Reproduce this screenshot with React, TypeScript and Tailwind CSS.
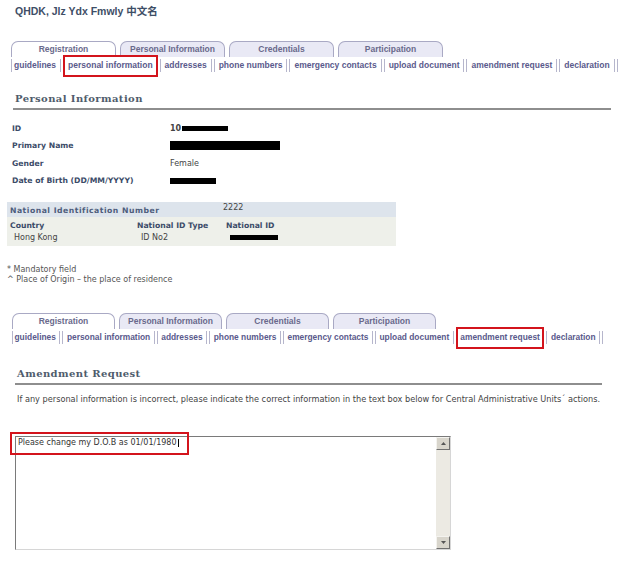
import React from "react"

const tabs = ["Registration", "Personal Information", "Credentials", "Participation"]
const links = [
  "guidelines",
  "personal information",
  "addresses",
  "phone numbers",
  "emergency contacts",
  "upload document",
  "amendment request",
  "declaration",
]

const Bar = () => <span className="w-px h-[13px] shrink-0 bg-[#b6b6cc]" />

const DoubleBar = () => (
  <span className="flex shrink-0 gap-[2px] mx-[2px]">
    <Bar />
    <Bar />
  </span>
)

const TabBar = ({ active, tabW, small }: { active: string; tabW: number; small?: boolean }) => (
  <div>
    <div className="flex gap-[4px] h-[16px]">
      {tabs.map((t, i) => (
        <div
          key={t}
          style={{ width: tabW }}
          className={
            i === 0
              ? "whitespace-nowrap rounded-t-[7px] border border-b-0 border-[#a9a9c4] bg-white text-center text-[8.5px] font-bold leading-[15px] text-[#6a6a8c]"
              : "whitespace-nowrap rounded-t-[7px] border border-b-0 border-[#a9a9c4] bg-[#e9e9f5] text-center text-[8.5px] font-bold leading-[15px] text-[#6a6a8c]"
          }
        >
          {t}
        </div>
      ))}
    </div>
    <div
      className={
        small
          ? "flex items-center h-[17px] whitespace-nowrap text-[8.4px] font-bold text-[#5a5a8c]"
          : "flex items-center h-[17px] whitespace-nowrap text-[8.5px] font-bold text-[#5a5a8c]"
      }
    >
      <Bar />
      {links.map((l, i) => (
        <React.Fragment key={l}>
          {i > 0 && <DoubleBar />}
          <span className={small ? "relative shrink-0 px-[1.5px] leading-[17px]" : "relative shrink-0 px-[2px] leading-[17px]"}>
            {l}
            {l === active && (
              <span className="absolute top-[-2px] bottom-[-3px] left-[-3px] right-[-3px] border-2 border-[#d3141c]" />
            )}
          </span>
        </React.Fragment>
      ))}
      <DoubleBar />
    </div>
  </div>
)

const Heading = ({ children, w }: { children: React.ReactNode; w: string }) => (
  <div className={w}>
    <div className="pl-[2px] font-['DejaVu_Serif',serif] text-[10px] font-bold tracking-[0.4px] text-[#4f5c6c] leading-[14px]">
      {children}
    </div>
    <div className="mt-[2px] h-[2px] bg-[#8e8e8e]" />
  </div>
)

const rows: [string, React.ReactNode][] = [
  ["ID", <span className="font-bold">10<span className="inline-block w-[46px] h-[5px] bg-black align-middle ml-[1px]" /></span>],
  ["Primary Name", <span className="inline-block w-[110px] h-[9px] bg-black align-middle" />],
  ["Gender", "Female"],
  ["Date of Birth (DD/MM/YYYY)", <span className="inline-block w-[46px] h-[6px] bg-black align-middle" />],
]

export default function App() {
  return (
    <div className="w-[620px] h-[563px] overflow-hidden bg-white font-['DejaVu_Sans',sans-serif] text-[8px] text-[#444]">
      <div className="pt-[5px] pl-[15px] font-['Liberation_Sans','Noto_Sans_CJK_SC',sans-serif] text-[10.5px] font-bold text-[#3e4e66] leading-[12px]">
        QHDK, Jlz Ydx Fmwly 中文名
      </div>

      <div className="mt-[24px] ml-[11px] font-['Liberation_Sans',sans-serif]">
        <TabBar active="personal information" tabW={105} />
      </div>

      <div className="mt-[18px] ml-[13px]">
        <Heading w="w-[598px]">Personal Information</Heading>
      </div>

      <div className="mt-[10px] ml-[12px] grid grid-cols-[158px_1fr] auto-rows-[17.5px] items-center">
        {rows.map(([k, v]) => (
          <React.Fragment key={k}>
            <div className="font-bold text-[7.7px] text-[#3b4b68]">{k}</div>
            <div>{v}</div>
          </React.Fragment>
        ))}
      </div>

      <div className="mt-[12px] ml-[7px] w-[389px]">
        <div className="h-[15px] bg-[#dde4ec] flex">
          <div className="w-[216px] pl-[3px] leading-[17px] font-bold text-[7.7px] tracking-[0.5px] text-[#4d5d7c]">
            National Identification Number
          </div>
          <div className="leading-[12px]">2222</div>
        </div>
        <div className="bg-[#eef0ea] pt-[3px] pb-[2px]">
          <div className="flex h-[12px] items-center font-bold text-[7.7px] text-[#3b4b68]">
            <div className="w-[130px] pl-[3px]">Country</div>
            <div className="w-[89px]">National ID Type</div>
            <div>National ID</div>
          </div>
          <div className="flex h-[12px] items-center">
            <div className="w-[134px] pl-[7px]">Hong Kong</div>
            <div className="w-[89px]">ID No2</div>
            <div>
              <span className="inline-block w-[48px] h-[5px] bg-black align-middle" />
            </div>
          </div>
        </div>
      </div>

      <div className="mt-[19px] ml-[7px] leading-[10px] text-[#555]">
        <div>* Mandatory field</div>
        <div>^ Place of Origin – the place of residence</div>
      </div>

      <div className="mt-[28px] ml-[12px] font-['Liberation_Sans',sans-serif]">
        <TabBar active="amendment request" tabW={103} small />
      </div>

      <div className="mt-[21px] ml-[15px]">
        <Heading w="w-[587px]">Amendment Request</Heading>
      </div>

      <div className="mt-[9px] ml-[17px] text-[8.2px] text-[#444] leading-[10px] whitespace-nowrap">
        If any personal information is incorrect, please indicate the correct information in the text box below for Central Administrative Units´ actions.
      </div>

      <div className="relative mt-[32px] ml-[15px] w-[436px] h-[114px] flex border border-t-[#7a7a7a] border-l-[#7a7a7a] border-r-[#d6d6d6] border-b-[#d6d6d6]">
        <div className="flex-1 pl-[2px] pt-[1px] leading-[10px] text-[#333]">
          Please change my D.O.B as 01/01/1980<span className="inline-block w-px h-[8px] bg-black align-middle ml-[1px]" />
        </div>
        <div className="w-[14px] bg-[#eceae3] flex flex-col justify-between">
          <div className="h-[13px] bg-[#d8d5cc] border border-[#f4f3ef] border-r-[#6f6f6f] border-b-[#6f6f6f] flex items-center justify-center">
            <svg width="5" height="3" viewBox="0 0 5 3"><path d="M0 3 L2.5 0 L5 3 Z" fill="#555" /></svg>
          </div>
          <div className="h-[13px] bg-[#d8d5cc] border border-[#f4f3ef] border-r-[#6f6f6f] border-b-[#6f6f6f] flex items-center justify-center">
            <svg width="5" height="3" viewBox="0 0 5 3"><path d="M0 0 L2.5 3 L5 0 Z" fill="#555" /></svg>
          </div>
        </div>
        <div className="absolute top-[-5px] left-[-6px] w-[179px] h-[23px] border-2 border-[#d3141c]" />
      </div>
    </div>
  )
}
